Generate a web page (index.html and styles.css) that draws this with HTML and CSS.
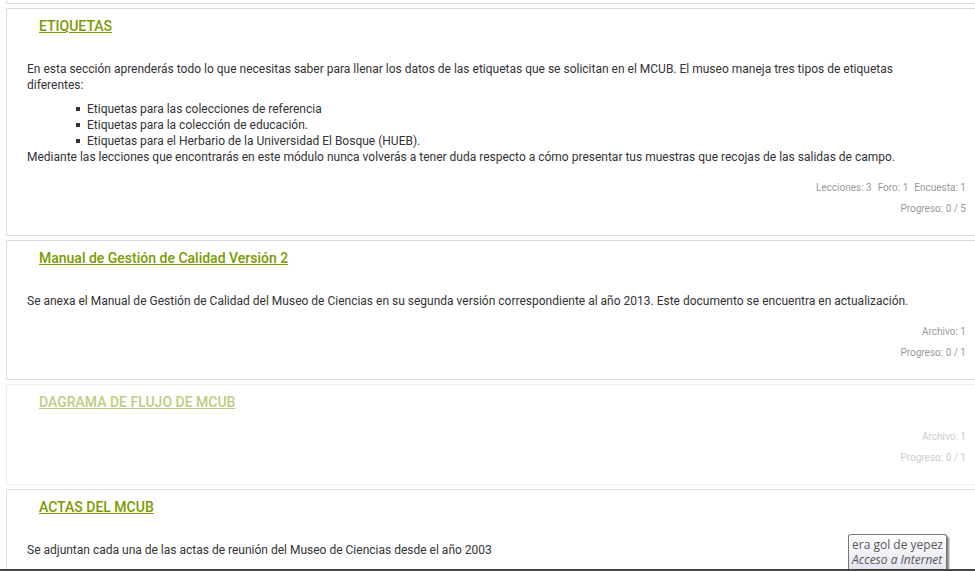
FILE: index.html
```html
<!DOCTYPE html>
<html lang="es">
<head>
<meta charset="utf-8">
<title>MCUB</title>
<link rel="stylesheet" href="styles.css">
</head>
<body>
<main class="course">
  <section class="section section-end"></section>
  <section class="section">
    <h3 class="title"><a href="#">ETIQUETAS</a></h3>
    <div class="summary">
      <p>En esta sección aprenderás todo lo que necesitas saber para llenar los datos de las etiquetas que se solicitan en el MCUB. El museo maneja tres tipos de etiquetas diferentes:</p>
      <ul>
        <li>Etiquetas para las colecciones de referencia</li>
        <li>Etiquetas para la colección de educación.</li>
        <li>Etiquetas para el Herbario de la Universidad El Bosque (HUEB).</li>
      </ul>
      <p>Mediante las lecciones que encontrarás en este módulo nunca volverás a tener duda respecto a cómo presentar tus muestras que recojas de las salidas de campo.</p>
    </div>
    <div class="counts"><span>Lecciones: 3</span><span>Foro: 1</span><span>Encuesta: 1</span></div>
    <div class="counts">Progreso: 0 / 5</div>
  </section>
  <section class="section">
    <h3 class="title"><a href="#">Manual de Gestión de Calidad Versión 2</a></h3>
    <div class="summary">
      <p>Se anexa el Manual de Gestión de Calidad del Museo de Ciencias en su segunda versión correspondiente al año 2013. Este documento se encuentra en actualización.</p>
    </div>
    <div class="counts">Archivo: 1</div>
    <div class="counts">Progreso: 0 / 1</div>
  </section>
  <section class="section dimmed">
    <h3 class="title"><a href="#">DAGRAMA DE FLUJO DE MCUB</a></h3>
    <div class="counts">Archivo: 1</div>
    <div class="counts">Progreso: 0 / 1</div>
  </section>
  <section class="section">
    <h3 class="title"><a href="#">ACTAS DEL MCUB</a></h3>
    <div class="summary">
      <p>Se adjuntan cada una de las actas de reunión del Museo de Ciencias desde el año 2003</p>
    </div>
  </section>
</main>
<div class="tooltip" role="tooltip"><span>era gol de yepez</span><em>Acceso a Internet</em></div>
</body>
</html>
```
FILE: styles.css
```css
* { box-sizing: border-box; }
body {
  margin: 0;
  height: 100vh;
  overflow: hidden;
  position: relative;
  border-bottom: 2px solid #444;
  background: #fff;
  color: #333;
  font: 12px/16px Roboto, sans-serif;
}
.course { padding-left: 6px; }
.section {
  border: 1px solid #ddd;
  border-right: 0;
  margin-bottom: 4px;
  padding: 7px 9px 16px 20px;
}
.section-end { height: 4px; padding: 0; border-top: 0; }
.title { margin: 0 12px 25px; font-size: 14px; line-height: 20px; font-weight: 500; }
.title a { color: #7a9a01; text-decoration: underline; }
p { margin: 0; }
ul { margin: 8px 0 0; padding-left: 49px; list-style: none; }
li { display: flex; align-items: center; gap: 7px; }
li::before { content: ""; width: 4px; height: 4px; background: #333; }
.summary { margin-bottom: 12px; padding-right: 24px; }
.counts {
  display: flex;
  justify-content: flex-end;
  gap: 6px;
  font-size: 10px;
  line-height: 21px;
  color: #999;
}
.dimmed { border-color: #eee; }
.dimmed .title { margin-bottom: 14px; }
.dimmed .title, .dimmed .counts { opacity: 0.5; }
.tooltip {
  position: absolute;
  right: 28px;
  bottom: 0;
  display: grid;
  padding: 2px 3px;
  border: 1px solid #767676;
  border-bottom: 0;
  border-radius: 3px 3px 0 0;
  background: linear-gradient(#fff, #e4e5f0);
  box-shadow: 2px 2px 2px rgba(0, 0, 0, 0.5);
  color: #575757;
  font: 12px/15px "Open Sans", sans-serif;
}
```
